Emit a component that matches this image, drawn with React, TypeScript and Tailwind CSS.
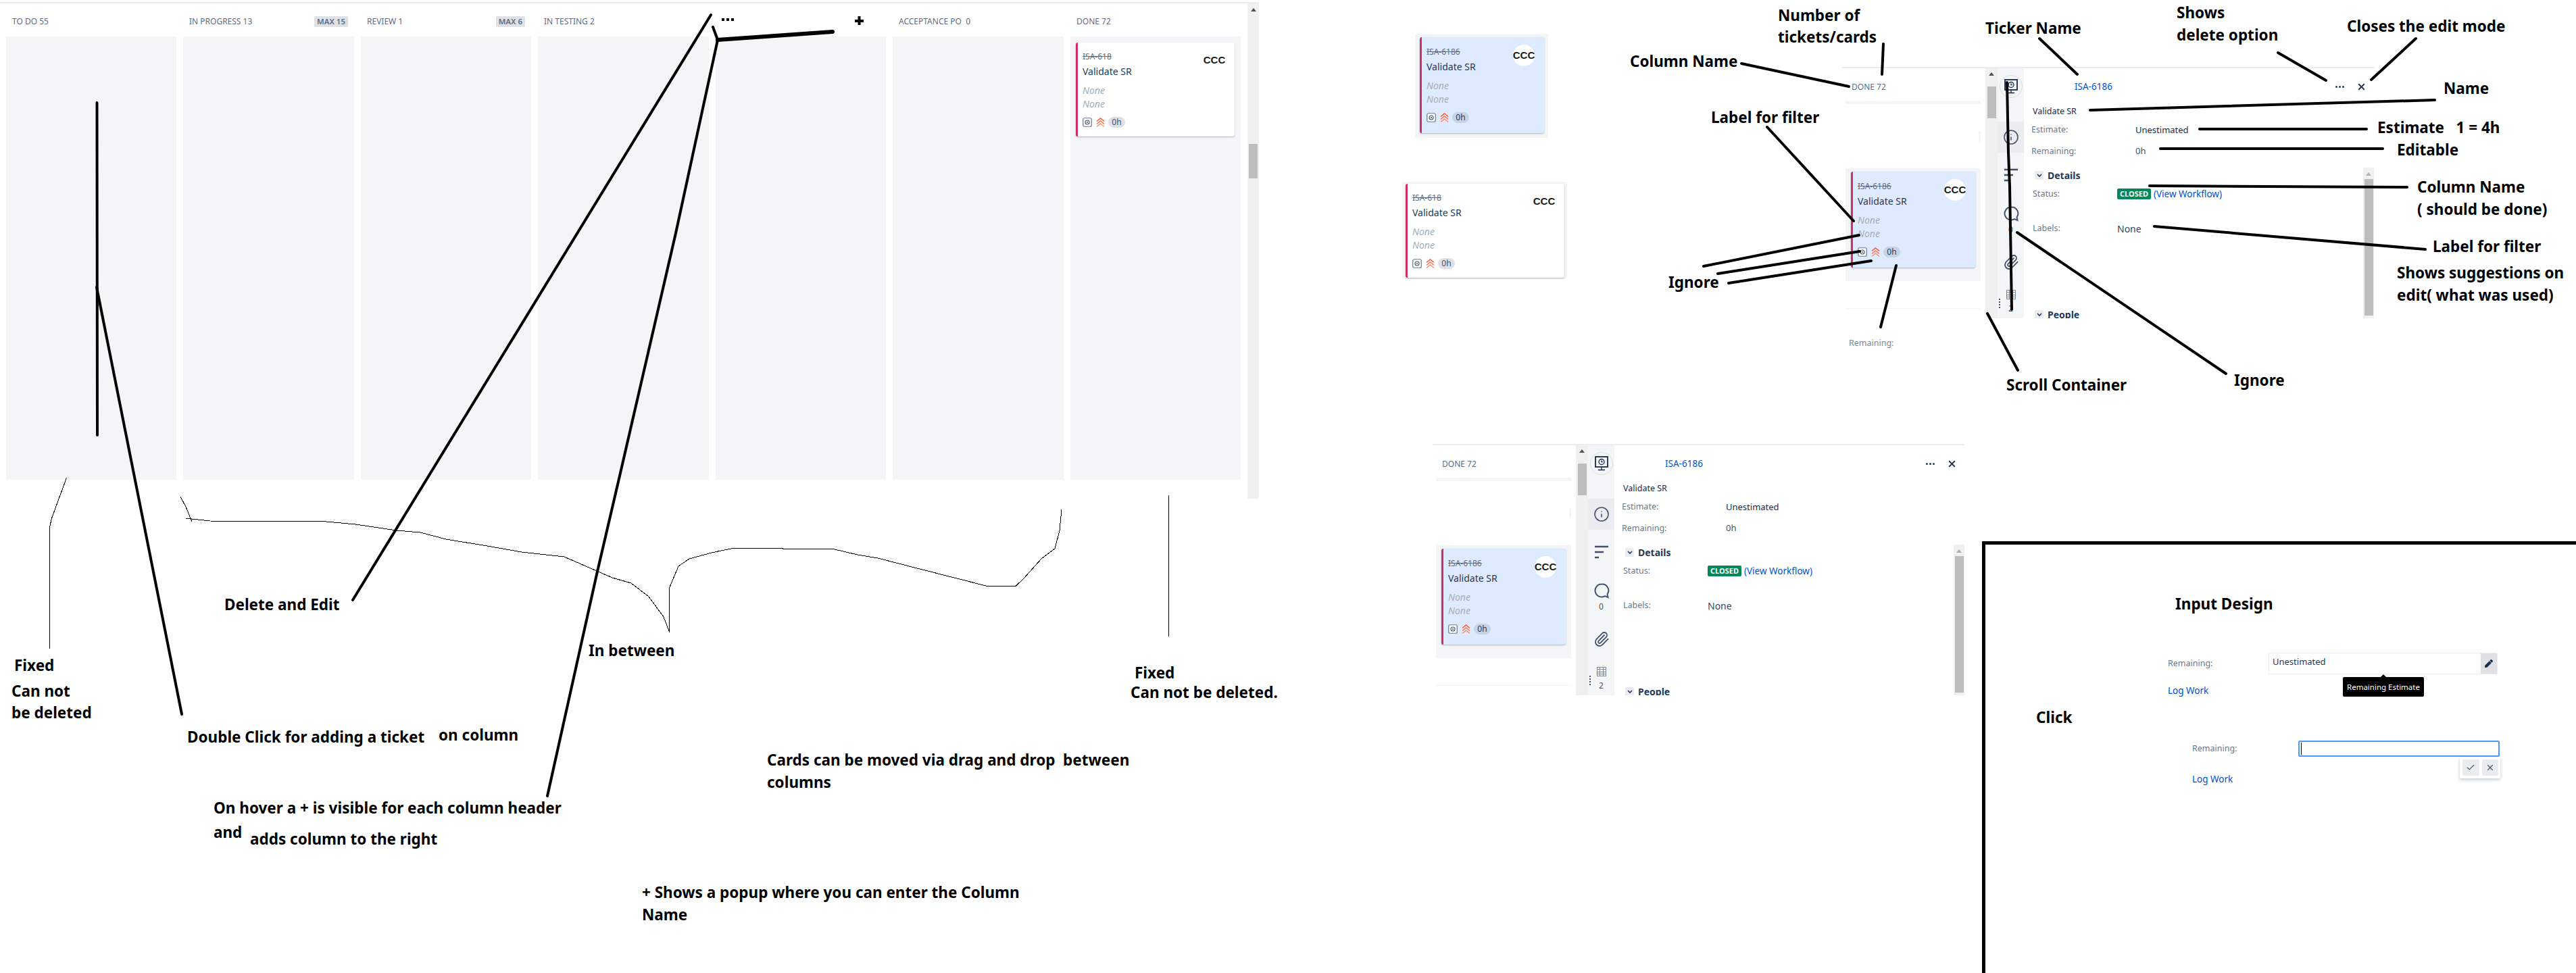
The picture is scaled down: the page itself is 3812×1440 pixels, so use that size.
import { Info, Paperclip, X, Check } from "lucide-react";
import { FaPen } from "react-icons/fa";
import type { ReactNode } from "react";

interface BoardColumn {
  title: string;
  limit?: string;
}

const columns: BoardColumn[] = [
  { title: "TO DO 55" },
  { title: "IN PROGRESS 13", limit: "MAX 15" },
  { title: "REVIEW 1", limit: "MAX 6" },
  { title: "IN TESTING 2" },
  { title: "" },
  { title: "ACCEPTANCE PO  0" },
  { title: "DONE 72" },
];

function IssueTypeIcon() {
  return (
    <svg width="14" height="14" viewBox="0 0 14 14" fill="none">
      <rect x="0.75" y="0.75" width="12.5" height="12.5" rx="2" fill="#fff" stroke="#6b778c" strokeWidth="1.2" />
      <circle cx="7" cy="7" r="3" stroke="#42526e" strokeWidth="1.1" />
      <circle cx="7" cy="7" r="1" fill="#42526e" />
    </svg>
  );
}

function PriorityIcon() {
  return (
    <svg width="13" height="15" viewBox="0 0 13 15" fill="none" strokeWidth="1.6">
      <path d="M1 5.5 6.5 1 12 5.5" stroke="#ff5630" />
      <path d="M1 9.5 6.5 5 12 9.5" stroke="#ff7452" />
      <path d="M1 13.5 6.5 9 12 13.5" stroke="#ff8f73" />
    </svg>
  );
}

function TicketCard({ id, selected }: { id: string; selected?: boolean }) {
  return (
    <div
      className={
        selected
          ? "relative w-[184px] h-[142px] bg-[#deebff] border-l-[3px] border-[#cf2f67] rounded-[3px] shadow-[0_1px_2px_rgba(9,30,66,0.3)] pl-[7px] pt-[13px]"
          : "relative w-[235px] h-[139px] bg-white border-l-[3px] border-[#cf2f67] rounded-[3px] shadow-[0_1px_2px_rgba(9,30,66,0.3)] pl-[7px] pt-[12px]"
      }
    >
      <div className="h-[18px] leading-[18px] text-[12px] text-[#5e6c84] line-through">{id}</div>
      <div className="h-[26px] leading-[26px] text-[14px] text-[#253858]">Validate SR</div>
      <div className="mt-[5px] h-[20px] leading-[20px] text-[14px] italic text-[#a5adba]">None</div>
      <div className="h-[20px] leading-[20px] text-[14px] italic text-[#a5adba]">None</div>
      <div className="mt-[9px] flex items-center h-[16px]">
        <IssueTypeIcon />
        <span className="ml-[6px]">
          <PriorityIcon />
        </span>
        <span
          className={
            selected
              ? "ml-[5px] w-[25px] h-[16px] rounded-full bg-[#c6d4ea] text-[#253858] text-[12px] leading-[16px] text-center"
              : "ml-[5px] w-[25px] h-[16px] rounded-full bg-[#dfe1e6] text-[#42526e] text-[12px] leading-[16px] text-center"
          }
        >
          0h
        </span>
      </div>
      <div
        className={
          selected
            ? "absolute right-[14px] top-[11px] w-[32px] h-[32px] rounded-full bg-white flex items-center justify-center font-['Liberation_Sans',sans-serif] font-bold text-[15px] text-[#1a1a1a]"
            : "absolute right-[14px] top-[10px] w-[32px] h-[32px] rounded-full flex items-center justify-center font-['Liberation_Sans',sans-serif] font-bold text-[15px] text-[#1a1a1a]"
        }
      >
        CCC
      </div>
    </div>
  );
}

function Board() {
  return (
    <div className="absolute left-0 top-[3px] w-[1863px] h-[735px] flex flex-col">
      <div className="h-[2px] bg-[#ebecf0] shrink-0" />
      <div className="flex flex-1">
        <div className="w-[1846px] pl-[9px]">
          <div className="grid grid-cols-[252px_253px_252px_253px_252px_253px_252px] gap-x-[10px]">
            {columns.map((col, i) => (
              <div key={i}>
                <div className="h-[49px] flex items-center justify-between pl-[9px] pr-[9px] pt-[5px] text-[12px] text-[#5e6c84] whitespace-pre">
                  <span>{col.title}</span>
                  {col.limit && (
                    <span className="h-[16px] px-[4px] rounded-[2px] bg-[#dfe1e6] text-[11.5px] leading-[16px] font-semibold">
                      {col.limit}
                    </span>
                  )}
                </div>
                <div className="h-[656px] bg-[#f4f5f7] pl-[8px] pt-[9px]">
                  {col.title === "DONE 72" && <TicketCard id="ISA-618" />}
                </div>
              </div>
            ))}
          </div>
        </div>
        <ScrollTrack />
      </div>
    </div>
  );
}

function ScrollTrack() {
  return (
    <div className="w-[17px] bg-[#f0f0f0] flex flex-col items-center">
      <div className="mt-[7px] w-0 h-0 border-x-[4px] border-x-transparent border-b-[5px] border-b-[#505050]" />
      <div className="mt-[196px] w-[13px] h-[51px] bg-[#bdbdbd]" />
    </div>
  );
}

function MonitorIcon() {
  return (
    <div className="w-[34px] h-[34px] rounded-full border border-[#dfe1e6] flex items-center justify-center">
      <svg width="24" height="24" viewBox="0 0 24 24" fill="none" stroke="#172b4d" strokeWidth="1.8">
        <rect x="3" y="2" width="18" height="15" />
        <circle cx="12" cy="9.5" r="4" strokeWidth="1.3" />
        <path d="M12 7.5v2.2h1.8M12 17v4M7 21.5h10" strokeWidth="1.3" />
      </svg>
    </div>
  );
}

function SortIcon() {
  return (
    <svg width="20" height="22" viewBox="0 0 20 22" fill="none" stroke="#42526e" strokeWidth="2.4">
      <path d="M0 3h20M0 11h13M0 19h6" />
    </svg>
  );
}

function CommentIcon() {
  return (
    <svg width="24" height="24" viewBox="0 0 24 24" fill="none" stroke="#42526e" strokeWidth="2">
      <path d="M12 2.5a9.5 9.5 0 1 0 5 17.6l4.5 2-1-4.6A9.5 9.5 0 0 0 12 2.5Z" />
    </svg>
  );
}

function GridIcon() {
  return (
    <svg width="14" height="14" viewBox="0 0 14 14" fill="#fff" stroke="#7a869a" strokeWidth="1">
      <rect x="0.5" y="0.5" width="13" height="13" />
      <path d="M4.5 0.5v13M9.5 0.5v13M0.5 3.5h13M0.5 7.5h13M0.5 10.5h13" />
    </svg>
  );
}

function MoreDots() {
  return (
    <span className="ml-auto flex gap-[2px]">
      <span className="w-[3px] h-[3px] rounded-full bg-[#253858]" />
      <span className="w-[3px] h-[3px] rounded-full bg-[#253858]" />
      <span className="w-[3px] h-[3px] rounded-full bg-[#253858]" />
    </span>
  );
}

function SectionHead({ title, className }: { title: string; className: string }) {
  return (
    <div className={"flex items-center pl-[3px] h-[23px] " + className}>
      <span className="w-[13px] h-[13px] rounded-[2px] bg-[#ebecf0] flex items-center justify-center">
        <svg width="8" height="6" viewBox="0 0 8 6" fill="none" stroke="#253858" strokeWidth="1.6">
          <path d="M1 1l3 3 3-3" />
        </svg>
      </span>
      <span className="ml-[6px] text-[14px] font-bold text-[#253858]">{title}</span>
    </div>
  );
}

function IssuePanel({ className }: { className: string }) {
  return (
    <div className={"absolute w-[787px] h-[372px] flex flex-col overflow-hidden " + className}>
      <div className="h-[2px] bg-[#ebecf0] shrink-0" />
      <div className="flex flex-1 min-h-0">
        {/* colonna done a sinistra */}
        <div className="w-[212px] pl-[5px] shrink-0">
          <div className="w-[200px]">
            <div className="h-[48px] flex items-center pl-[9px] pt-[8px] text-[12px] text-[#5e6c84]">DONE 72</div>
            <div className="h-[5px] bg-[#f4f5f7]" />
            <div className="relative h-[95px]">
              <div className="absolute right-0 top-[40px] w-[3px] h-[15px] bg-[#f4f5f7]" />
            </div>
            <div className="h-[167px] bg-[#f4f5f7] pl-[8px] pt-[5px]">
              <TicketCard id="ISA-6186" selected />
            </div>
            <div className="mt-[40px] border-t border-[#f4f5f7]" />
          </div>
        </div>
        <div className="w-[18px] bg-[#f0f0f0] shrink-0 flex flex-col items-center">
          <div className="mt-[6px] w-0 h-0 border-x-[4px] border-x-transparent border-b-[5px] border-b-[#505050]" />
          <div className="mt-[16px] w-[13px] h-[47px] bg-[#bdbdbd]" />
        </div>
        {/* barra laterale */}
        <div className="relative w-[39px] bg-[#f4f5f7] shrink-0 flex flex-col items-center text-[12px] text-[#42526e]">
          <div className="mt-[10px]">
            <MonitorIcon />
          </div>
          <div className="mt-[35px] w-full h-[46px] bg-[#ebecf0] flex items-center justify-center">
            <Info size={24} strokeWidth={1.6} color="#42526e" />
          </div>
          <div className="mt-[22px]">
            <SortIcon />
          </div>
          <div className="mt-[34px]">
            <CommentIcon />
          </div>
          <div className="mt-[4px] h-[16px] leading-[16px]">0</div>
          <div className="mt-[28px]">
            <Paperclip size={24} strokeWidth={1.8} color="#42526e" />
          </div>
          <div className="mt-[29px]">
            <GridIcon />
          </div>
          <div className="mt-[6px] h-[16px] leading-[16px]">2</div>
          <div className="absolute left-[2px] top-[341px] flex flex-col gap-[2px]">
            <span className="w-[2px] h-[2px] bg-[#42526e]" />
            <span className="w-[2px] h-[2px] bg-[#42526e]" />
            <span className="w-[2px] h-[2px] bg-[#42526e]" />
            <span className="w-[2px] h-[2px] bg-[#42526e]" />
          </div>
        </div>
        {/* dettaglio ticket */}
        <div className="flex-1 flex flex-col pl-[11px] min-w-0 text-[12.5px]">
          <div className="h-[54px] flex items-center shrink-0">
            <a className="ml-[64px] text-[13.5px] text-[#0052cc]">ISA-6186</a>
            <MoreDots />
            <span className="ml-[18px] mr-[11px]">
              <X size={15} strokeWidth={3.2} color="#253858" />
            </span>
          </div>
          <div className="h-[20px] flex items-center pl-[2px] text-[#172b4d] shrink-0">Validate SR</div>
          <div className="h-[35px] flex items-center shrink-0">
            <span className="w-[154px] text-[#6b778c]">Estimate:</span>
            <span className="text-[13px] text-[#172b4d]">Unestimated</span>
          </div>
          <div className="h-[28px] flex items-center shrink-0">
            <span className="w-[154px] text-[#6b778c]">Remaining:</span>
            <span className="text-[13px] text-[#42526e]">0h</span>
          </div>
          <div className="mt-[10px] flex flex-1 min-h-0 -ml-[1px]">
            <div className="flex-1 pl-[3px] overflow-hidden">
              <SectionHead title="Details" className="" />
              <div className="h-[32px] flex items-center">
                <span className="w-[125px] text-[#6b778c]">Status:</span>
                <span className="h-[16px] px-[4px] rounded-[2px] bg-[#00875a] text-white text-[11px] font-bold leading-[16px]">
                  CLOSED
                </span>
                <a className="ml-[4px] text-[#0052cc] text-[13.5px]">(View Workflow)</a>
              </div>
              <div className="mt-[19px] h-[32px] flex items-center">
                <span className="w-[125px] text-[#6b778c]">Labels:</span>
                <span className="text-[14px] text-[#344563]">None</span>
              </div>
              <SectionHead title="People" className="mt-[100px]" />
            </div>
            <div className="w-[16px] bg-[#f0f0f0] flex flex-col items-center shrink-0">
              <div className="mt-[7px] w-0 h-0 border-x-[4px] border-x-transparent border-b-[5px] border-b-[#b0b0b0]" />
              <div className="mt-[5px] w-[13px] h-[202px] bg-[#bdbdbd]" />
            </div>
          </div>
        </div>
      </div>
    </div>
  );
}

function Note({ className, children }: { className: string; children: ReactNode }) {
  return (
    <div className={"absolute text-[22.5px] leading-[28px] font-bold text-black whitespace-pre " + className}>
      {children}
    </div>
  );
}

// tratti a mano sopra gli screenshot
function Scribbles() {
  return (
    <svg className="absolute left-0 top-0" width="3812" height="1440" viewBox="0 0 3812 1440" fill="none" stroke="#000" strokeLinecap="round" strokeLinejoin="round">
      <g strokeWidth="4">
        <path d="M143.5 152L144 644" />
        <path d="M143 425L269 1057" />
        <path d="M1052 22L522 888" />
        <path d="M1055 40L1062 59L1000 345L918 700L883 850L810 1178" />
        <path d="M1062 59L1232 47" strokeWidth="6" />
        <path d="M2577 94L2736 128" />
        <path d="M2787 65L2785 110" />
        <path d="M2615 188L2743 327" />
        <path d="M2521 394L2751 348" />
        <path d="M2542 405L2752 372" />
        <path d="M2558 419L2769 386" />
        <path d="M2806 393L2783 484" />
        <path d="M3018 57L3074 110" />
        <path d="M3371 78L3442 119" />
        <path d="M3575 57L3509 118" />
        <path d="M3603 148L3093 163" />
        <path d="M3255 191L3502 191" />
        <path d="M3197 220L3526 220" />
        <path d="M3181 275L3562 277" />
        <path d="M3188 335L3589 369" />
        <path d="M2941 464L2986 548" />
        <path d="M2985 344L3294 553" />
        <path d="M2970 122L2972 226L2974 276L2977 458" />
      </g>
      {/* i tre puntini e il + disegnati sopra la colonna */}
      <g strokeLinecap="butt">
        <path d="M1068 29h4M1075 29h4M1082 29h4" strokeWidth="4" />
        <path d="M1271.5 24V37M1265 31H1278" strokeWidth="4" />
      </g>
      <g strokeWidth="1" shapeRendering="crispEdges" strokeLinecap="butt">
        <path d="M98.5 707L76.5 767L73.5 780L73.5 960" />
        <path d="M267 735L275 750L284 772M275 767L316 771.5L478 771.5L526 776L587 785L622 788L660 798L721 808L772 817L835 824L906 855L934 863L960 883L982 913L990.5 935L990.5 870L1004 838L1020 827L1053 818L1084 811.5L1233 812.5L1269 821L1299 826L1357 841L1461 867.5L1503 867.5L1515 856L1541 827L1561 812L1568 785L1571 754" />
        <path d="M1729.5 733L1729.5 942" />
      </g>
    </svg>
  );
}

function InputDesign() {
  return (
    <>
      <div className="absolute left-[2933px] top-[801px] right-0 bottom-0 border-l-[5px] border-t-[5px] border-black" />
      <div className="absolute left-[3208px] top-[966px] text-[12.5px]">
        <div className="flex items-center h-[32px]">
          <span className="w-[149px] text-[#6b778c]">Remaining:</span>
          <div className="w-[339px] h-[32px] flex border border-[#ebecf0] rounded-[2px]">
            <span className="flex-1 pl-[5px] pt-[3px] text-[13px] text-[#253858]">Unestimated</span>
            <span className="w-[24px] bg-[#dfe1e6] flex items-center justify-center">
              <FaPen size={12} color="#172b4d" />
            </span>
          </div>
        </div>
        <a className="block mt-[15px] h-[18px] leading-[18px] text-[13.5px] text-[#0052cc]">Log Work</a>
        <div className="absolute left-[259px] top-[36px] w-[120px] h-[29px] bg-black rounded-[2px] text-white text-[11.5px] flex items-center justify-center">
          Remaining Estimate
          <div className="absolute left-[56px] -top-[4px] w-0 h-0 border-x-[4px] border-x-transparent border-b-[4px] border-b-black" />
        </div>
      </div>
      <div className="absolute left-[3244px] top-[1096px] text-[12.5px]">
        <div className="flex items-center h-[24px]">
          <span className="w-[157px] text-[#6b778c]">Remaining:</span>
          <div className="w-[298px] h-[24px] border-2 border-[#4c9aff] rounded-[2px] flex items-center pl-[2px]">
            <span className="w-px h-[18px] bg-black" />
          </div>
        </div>
        <a className="block mt-[24px] h-[18px] leading-[18px] text-[13.5px] text-[#0052cc]">Log Work</a>
        <div className="absolute left-[396px] top-[24px] w-[60px] h-[32px] bg-white rounded-[2px] shadow-[0_2px_5px_rgba(9,30,66,0.25)] flex items-center justify-center gap-[4px]">
          <span className="w-[25px] h-[24px] bg-[#ebecf0] rounded-[2px] flex items-center justify-center">
            <Check size={14} color="#42526e" />
          </span>
          <span className="w-[24px] h-[24px] bg-[#ebecf0] rounded-[2px] flex items-center justify-center">
            <X size={14} color="#42526e" />
          </span>
        </div>
      </div>
    </>
  );
}

export default function App() {
  return (
    <div className="relative w-[3812px] h-[1440px] bg-white overflow-hidden font-['Noto_Sans',sans-serif]">
      <Board />

      <div className="absolute left-[2094px] top-[50px] w-[197px] h-[154px] bg-[#f4f5f7] pl-[7px] pt-[5px]">
        <TicketCard id="ISA-6186" selected />
      </div>
      <div className="absolute left-[2075px] top-[269px] w-[244px] h-[144px] bg-[#f4f5f7] pl-[5px] pt-[3px]">
        <TicketCard id="ISA-618" />
      </div>

      <IssuePanel className="left-[2726px] top-[99px]" />
      <IssuePanel className="left-[2120px] top-[657px]" />
      <div className="absolute left-[2736px] top-[499px] text-[12.5px] leading-[18px] text-[#7a869a]">Remaining:</div>

      <InputDesign />
      <Scribbles />

      <Note className="left-[21px] top-[971px]">Fixed</Note>
      <Note className="left-[17px] top-[1009px]">Can not</Note>
      <Note className="left-[17px] top-[1041px]">be deleted</Note>
      <Note className="left-[332px] top-[881px]">Delete and Edit</Note>
      <Note className="left-[871px] top-[949px]">In between</Note>
      <Note className="left-[277px] top-[1077px]">Double Click for adding a ticket</Note>
      <Note className="left-[649px] top-[1074px]">on column</Note>
      <Note className="left-[316px] top-[1182px]">On hover a + is visible for each column header</Note>
      <Note className="left-[316px] top-[1218px]">and</Note>
      <Note className="left-[370px] top-[1228px]">adds column to the right</Note>
      <Note className="left-[1679px] top-[982px]">Fixed</Note>
      <Note className="left-[1673px] top-[1011px]">Can not be deleted.</Note>
      <Note className="left-[1135px] top-[1111px]">Cards can be moved via drag and drop  between</Note>
      <Note className="left-[1135px] top-[1144px]">columns</Note>
      <Note className="left-[950px] top-[1307px]">+ Shows a popup where you can enter the Column</Note>
      <Note className="left-[950px] top-[1340px]">Name</Note>

      <Note className="left-[2631px] top-[9px]">Number of</Note>
      <Note className="left-[2631px] top-[41px]">tickets/cards</Note>
      <Note className="left-[2412px] top-[77px]">Column Name</Note>
      <Note className="left-[2532px] top-[160px]">Label for filter</Note>
      <Note className="left-[2469px] top-[404px]">Ignore</Note>
      <Note className="left-[2938px] top-[28px]">Ticker Name</Note>
      <Note className="left-[3221px] top-[5px]">Shows</Note>
      <Note className="left-[3221px] top-[38px]">delete option</Note>
      <Note className="left-[3473px] top-[25px]">Closes the edit mode</Note>
      <Note className="left-[3616px] top-[117px]">Name</Note>
      <Note className="left-[3518px] top-[175px]">Estimate   1 = 4h</Note>
      <Note className="left-[3547px] top-[208px]">Editable</Note>
      <Note className="left-[3577px] top-[263px]">Column Name</Note>
      <Note className="left-[3577px] top-[296px]">( should be done)</Note>
      <Note className="left-[3600px] top-[351px]">Label for filter</Note>
      <Note className="left-[3547px] top-[390px]">Shows suggestions on</Note>
      <Note className="left-[3547px] top-[423px]">edit( what was used)</Note>
      <Note className="left-[2969px] top-[556px]">Scroll Container</Note>
      <Note className="left-[3306px] top-[549px]">Ignore</Note>
      <Note className="left-[3219px] top-[880px]">Input Design</Note>
      <Note className="left-[3013px] top-[1048px]">Click</Note>
    </div>
  );
}
